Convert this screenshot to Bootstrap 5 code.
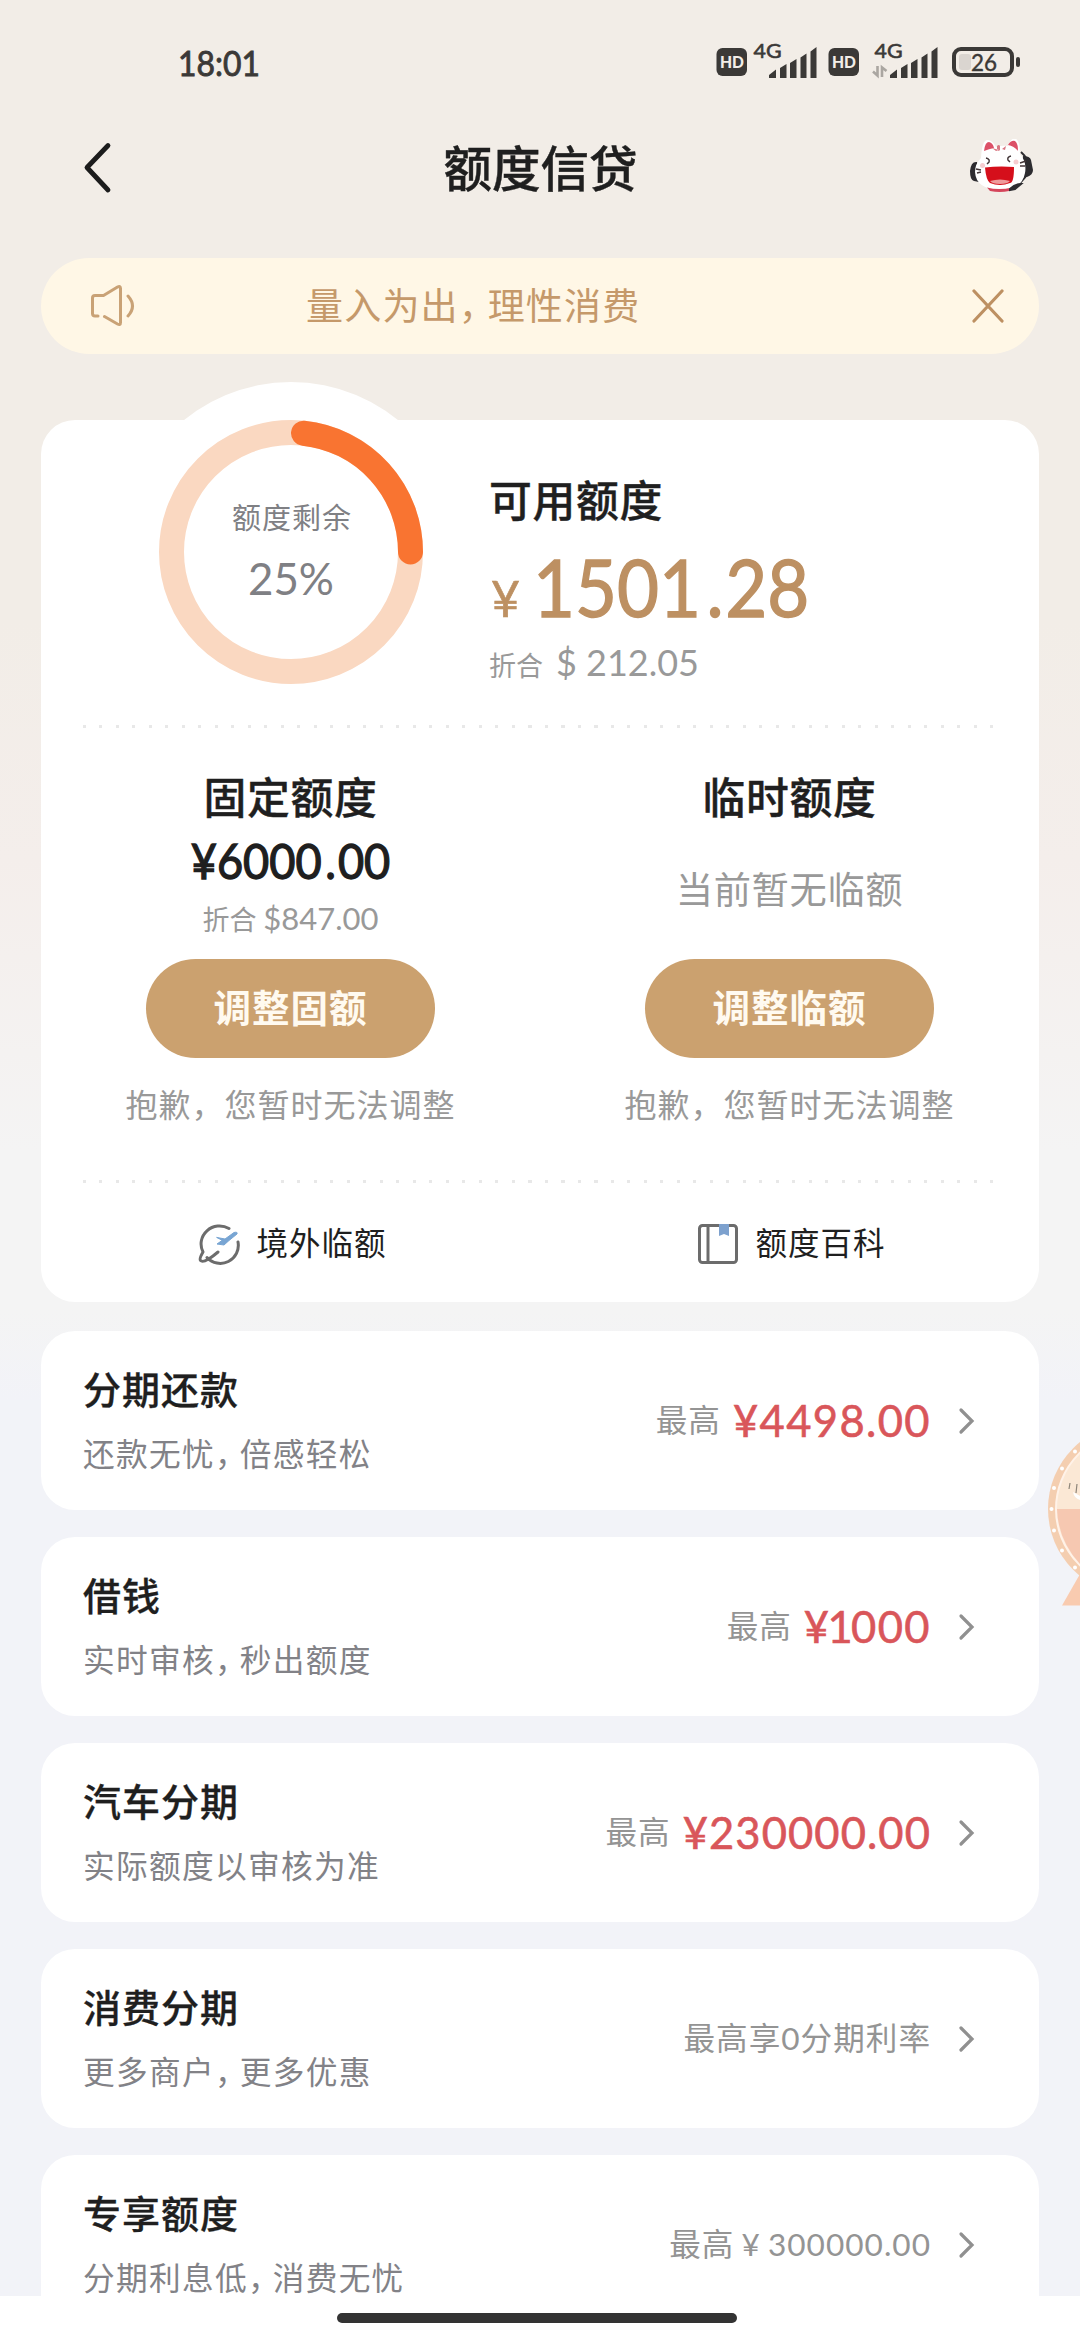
<!DOCTYPE html>
<html lang="zh-CN">
<head>
<meta charset="utf-8">
<meta name="viewport" content="width=device-width, initial-scale=1">
<title>额度信贷</title>
<link href="https://cdn.jsdelivr.net/npm/bootstrap@5.3.0/dist/css/bootstrap.min.css" rel="stylesheet">
<style>
body{font-family:Lato,"Noto Sans CJK SC",sans-serif;height:2340px;color:#1f1f1f;background:#fff}
.screen{width:1080px;height:2340px;background:linear-gradient(#f2ede7 0,#f2ede7 620px,#f4eeeb 860px,#f4f4f4 1150px,#f4f4f4 1310px,#f2f3f8 1400px)}
.statusbar{height:118px;padding:6px 59px 0 178px}
.clock{font-size:35px;color:#3b3937;transform:scaleX(.91);transform-origin:left;-webkit-text-stroke:.9px #3b3937}
.topbar{height:100px;padding:0 47px 0 82px}
.page-title{font-size:48.5px;font-weight:500;line-height:60px;padding-left:2px;-webkit-text-stroke:.4px #1f1f1f}
.notice{height:96px;margin:40px 41px 0;padding:0 34px 0 46px;background:#fff7e6;color:#c5996a;font-size:37px;letter-spacing:1.2px}
.notice-text{margin-left:171px}
.comma{font-feature-settings:"halt";padding:0 .28em 0 0;letter-spacing:0}
.panel{background:#fff;border-radius:34px;margin:0 41px}
.main-panel{margin-top:66px;height:882px}
.hero{height:305px;padding-left:80px}
.ring{width:340px;height:340px;margin-top:-38px}
.hero-info{margin-left:28px;padding-top:51px}
.h-sec{font-size:42.8px;font-weight:500;line-height:60px;letter-spacing:.7px;-webkit-text-stroke:.4px #1f1f1f}
.big-money{color:#bd9062;font-size:80px;line-height:84px;margin-top:13px;-webkit-text-stroke:1.4px #bd9062}
.big-money .yen{font-size:50px;margin:0 13px 0 2px;-webkit-text-stroke:.6px #bd9062}
.big-money .digits{display:inline-block;transform:scaleX(.905);transform-origin:left}
.big-money .pt{margin:0 2px 0 6px}
.conv{color:#999;line-height:40px;height:40px}
.dots{height:3px;margin:0 42px;background:repeating-linear-gradient(90deg,#e8e8e8 0 3px,transparent 3px 16.5px)}
.cols{height:452px;padding-top:40px}
.fixed-money{font-size:48px;line-height:60px;margin-top:3px;transform:scaleX(.94);-webkit-text-stroke:1.3px #1f1f1f}
.fixed-money .pt{margin:0 2px 0 4px}
.none-yet{font-size:37.3px;line-height:50px;color:#999;margin-top:37px;margin-bottom:44px;letter-spacing:.6px}
.pill{width:289px;height:99px;background:#cba16f;color:#fffaf0;font-size:37.5px;font-weight:700;letter-spacing:1px;border:0;border-radius:50px}
.sorry{font-size:32px;letter-spacing:1px;line-height:48px;color:#999;margin-top:23px}
.links{height:122px;font-size:31.5px;letter-spacing:1px;color:#1f1f1f}
.links>div{padding-left:4px}
.list{gap:27px;margin-top:29px;height:965px;overflow:hidden}
.item{height:179px;flex:none;padding:0 63px 0 42px}
.item-title{font-size:38px;font-weight:500;letter-spacing:1px;line-height:50px;margin-top:-3px;-webkit-text-stroke:.3px #1f1f1f}
.item-sub{font-size:31.7px;letter-spacing:1.3px;line-height:40px;margin-top:20px;color:#828287}
.hint{font-size:31.6px;letter-spacing:1px;color:#949494}
.red-money{color:#d9565a;font-size:43.5px;letter-spacing:1.4px;-webkit-text-stroke:.6px #d9565a;margin-left:12px}
.red-money .slim{margin:0 -3px}
.chev{margin-left:27px}
.homebar{height:44px;background:#fff;padding-right:7px}
.homebar span{width:400px;height:10px;border-radius:5px;background:#333}
.wheel{top:1420px;right:0;width:34px;height:188px}
</style>
</head>
<body>
<div class="screen d-flex flex-column position-relative overflow-hidden">
  <header class="statusbar d-flex justify-content-between align-items-center flex-shrink-0">
    <span class="clock">18:01</span>
    <svg width="306" height="62" viewBox="715 31 306 62" fill="#3b3937" font-family="Lato,sans-serif">
      <rect x="716.500" y="48" width="30.500" height="28" rx="6"/>
      <text x="720" y="68" font-size="16.500" font-weight="900" fill="#f2ede7" textLength="24" lengthAdjust="spacingAndGlyphs">HD</text>
      <text x="753.500" y="58" font-size="20" stroke="#3b3937" stroke-width=".6" textLength="28" lengthAdjust="spacingAndGlyphs">4G</text>
      <g id="bars"><path d="M769 78v-3l7-5.500V78zM780 78V68l6.500-4V78zM790 78V63l6.500-4V78zM800.500 78V57.500l6-4V78zM810.500 78V51.500l6-4.500V78z"/></g>
      <rect x="828.500" y="48" width="30.500" height="28" rx="6"/>
      <text x="832" y="68" font-size="16.500" font-weight="900" fill="#f2ede7" textLength="24" lengthAdjust="spacingAndGlyphs">HD</text>
      <text x="874.500" y="58" font-size="20" stroke="#3b3937" stroke-width=".6" textLength="28" lengthAdjust="spacingAndGlyphs">4G</text>
      <path d="M877.500 66v9.500l-4.500-4M882 77V67.500l4.500 3.500" stroke="#aaa6a1" stroke-width="2.600" fill="none"/>
      <use href="#bars" x="121"/>
      <rect x="954" y="49" width="58" height="26" rx="7" fill="none" stroke="#3b3937" stroke-width="4"/>
      <rect x="959" y="54" width="12" height="16" rx="3" fill="#dad5d0"/>
      <text x="971" y="70.500" font-size="22.500" stroke="#3b3937" stroke-width=".4" textLength="26" lengthAdjust="spacingAndGlyphs">26</text>
      <rect x="1016" y="57" width="4" height="10" rx="2"/>
    </svg>
  </header>

  <nav class="topbar d-flex justify-content-between align-items-center flex-shrink-0">
    <svg width="30" height="54" viewBox="0 0 30 54" fill="none" stroke="#1c1c1c" stroke-width="4.800" stroke-linecap="round" stroke-linejoin="round"><path d="M26 4.500 5 26.500l21 22.500"/></svg>
    <h1 class="page-title m-0">额度信贷</h1>
    <svg width="66" height="58" viewBox="965 139 66 58">
      <path d="M975 162q-6-1-7 9 0 9 4 10l5 1zM1021 156q7 0 8 4l2 10q0 5-6 7l-6 1z" fill="#2d2c30"/>
      <path d="M1019 152q7 6 8 16-2 12-18 21" fill="none" stroke="#2d2c30" stroke-width="2"/>
      <path d="M979 158q1-19 7-18 5 1 8 7 6-2 12-1 3-9 8-7 4 2 4 15 7 8 5 19-3 17-25 17-24-1-25-18 0-8 6-14z" fill="#fff"/>
      <path d="M982 151q1-9 5-9 4 1 5 6-5 1-10 3zM1006 145q3-5 7-4 3 2 3 10-4-5-10-6z" fill="#dc5168"/>
      <path d="M990 148l4 3 3-1zM995 146q2-2 3 0v4q-2 2-3 0zM1000 149l4-3-1 4z" fill="#d97782"/>
      <path d="M983 167.500q13-1.500 29-.500 0 16-4 16-10 4-20 0-4-3-5-15.500z" fill="#d50f1b"/>
      <path d="M988 181q10-3 20 0-2 3-10 3t-10-3z" fill="#ee9a9b"/>
      <path d="M985 187.500q12 3 25 0l-3 3.500q-9 2-19 0z" fill="#d5455b"/>
      <path d="M984 158q4 1 3 4l-2 2M1009 156q-4 1-3 4l2 2M974 169l5 1M975 173l4-1M1018 163l6-2M1018 166l5 0" fill="none" stroke="#413537" stroke-width="1.400"/>
      <circle cx="980.500" cy="165.500" r="2.500" fill="#f6cdd0"/><circle cx="1014" cy="162" r="2.500" fill="#f6cdd0"/>
      <path d="M1008 189q5-5 11-5l-6 5-5 1z" fill="#2d2c30" stroke="#2d2c30" stroke-width="2"/>
    </svg>
  </nav>

  <div class="notice d-flex align-items-center rounded-pill flex-shrink-0">
    <svg width="48" height="46" viewBox="88 283 48 46" fill="none" stroke="#c9a276" stroke-width="3" stroke-linecap="round" stroke-linejoin="round"><path d="M99 316h-3q-2.500 0-2.500-2.500V298q0-2.500 2.500-2.500h8.500l14-8.500q3-1.500 3 1.500v34q0 3-3 1.500l-13-7.500M129 296q9 10 0 20"/></svg>
    <span class="notice-text">量入为出<span class="comma">，</span>理性消费</span>
    <svg class="ms-auto" width="34" height="34" viewBox="0 0 34 34" stroke="#bd9062" stroke-width="3.200" stroke-linecap="round"><path d="M3 2 31 32M31 2 3 32"/></svg>
  </div>

  <section class="panel main-panel flex-shrink-0">
    <div class="hero d-flex align-items-start">
      <svg class="ring flex-shrink-0" viewBox="0 0 340 340" text-anchor="middle">
        <circle cx="170" cy="170" r="170" fill="#fff"/>
        <circle cx="170" cy="170" r="119.500" fill="none" stroke="#fad8c1" stroke-width="25"/>
        <path d="M182.500 51.200A119.500 119.500 0 0 1 289.500 170" fill="none" stroke="#f97431" stroke-width="25" stroke-linecap="round"/>
        <text x="171" y="147" font-size="29" letter-spacing="1" fill="#7f8084">额度剩余</text>
        <text x="170" y="212.500" font-size="44.500" fill="#7f8084" textLength="86" lengthAdjust="spacingAndGlyphs">25%</text>
      </svg>
      <div class="hero-info">
        <div class="h-sec">可用额度</div>
        <div class="big-money text-nowrap"><span class="yen">¥</span><span class="digits">1501<span class="pt">.</span>28</span></div>
        <div class="conv" style="margin-top:2px"><span style="font-size:27px">折合</span><span style="font-size:36px;margin-left:13px">$ 212.05</span></div>
      </div>
    </div>
    <div class="dots"></div>
    <div class="cols row g-0 text-center">
      <div class="col-6">
        <div class="h-sec">固定额度</div>
        <div class="fixed-money">¥6000<span class="pt">.</span>00</div>
        <div class="conv" style="margin:7px 0 21px"><span style="font-size:27px">折合 </span><span style="font-size:31px">$847.00</span></div>
        <button class="pill btn p-0">调整固额</button>
        <div class="sorry">抱歉，您暂时无法调整</div>
      </div>
      <div class="col-6">
        <div class="h-sec">临时额度</div>
        <div class="none-yet">当前暂无临额</div>
        <button class="pill btn p-0">调整临额</button>
        <div class="sorry">抱歉，您暂时无法调整</div>
      </div>
    </div>
    <div class="dots"></div>
    <div class="links row g-0 align-items-center">
      <div class="col-6 d-flex justify-content-center align-items-center">
        <svg class="me-3" width="42" height="42" viewBox="0 0 42 42" fill="none" stroke="#6c6c6c" stroke-width="3" stroke-linecap="round" stroke-linejoin="round"><path d="M31 5.500A18.500 18 0 0 0 5 29q-4 7-2.500 8.500Q6 41 20 29M9 34.500A18 18 0 0 0 40 19"/><path d="M19 14.500l8 1.500 9-6.500q4-1 3 1.500l-8 6.500-5 4.500-7-1 5-3.500z" fill="#78a5d3" stroke="#78a5d3" stroke-width="1"/></svg>
        <span>境外临额</span>
      </div>
      <div class="col-6 d-flex justify-content-center align-items-center">
        <svg class="me-3" width="42" height="42" viewBox="0 0 42 42" fill="none" stroke="#6c6c6c" stroke-width="3"><rect x="2.500" y="2.500" width="37" height="37" rx="3"/><path d="M11 3v36"/><path d="M22 1h10v12l-5-2-5 2z" fill="#7da1ce" stroke="none"/></svg>
        <span>额度百科</span>
      </div>
    </div>
  </section>

  <main class="list d-flex flex-column flex-shrink-0">
    <div class="panel item d-flex align-items-center">
      <div><div class="item-title">分期还款</div><div class="item-sub">还款无忧<span class="comma">，</span>倍感轻松</div></div>
      <span class="hint ms-auto">最高</span><span class="red-money">¥4498.00</span>
      <svg class="chev" width="18" height="28" viewBox="0 0 18 28" fill="none" stroke="#909090" stroke-width="3.200" stroke-linecap="round"><path d="M3 3 14 14 3 25"/></svg>
    </div>
    <div class="panel item d-flex align-items-center">
      <div><div class="item-title">借钱</div><div class="item-sub">实时审核<span class="comma">，</span>秒出额度</div></div>
      <span class="hint ms-auto">最高</span><span class="red-money">¥<span class="slim">1</span>000</span>
      <svg class="chev" width="18" height="28" viewBox="0 0 18 28" fill="none" stroke="#909090" stroke-width="3.200" stroke-linecap="round"><path d="M3 3 14 14 3 25"/></svg>
    </div>
    <div class="panel item d-flex align-items-center">
      <div><div class="item-title">汽车分期</div><div class="item-sub">实际额度以审核为准</div></div>
      <span class="hint ms-auto">最高</span><span class="red-money" style="letter-spacing:1.1px">¥230000.00</span>
      <svg class="chev" width="18" height="28" viewBox="0 0 18 28" fill="none" stroke="#909090" stroke-width="3.200" stroke-linecap="round"><path d="M3 3 14 14 3 25"/></svg>
    </div>
    <div class="panel item d-flex align-items-center">
      <div><div class="item-title">消费分期</div><div class="item-sub">更多商户<span class="comma">，</span>更多优惠</div></div>
      <span class="hint ms-auto">最高享0分期利率</span>
      <svg class="chev" width="18" height="28" viewBox="0 0 18 28" fill="none" stroke="#909090" stroke-width="3.200" stroke-linecap="round"><path d="M3 3 14 14 3 25"/></svg>
    </div>
    <div class="panel item d-flex align-items-center">
      <div><div class="item-title">专享额度</div><div class="item-sub">分期利息低<span class="comma">，</span>消费无忧</div></div>
      <span class="hint ms-auto" style="word-spacing:-2px">最高 ¥ 300000.00</span>
      <svg class="chev" width="18" height="28" viewBox="0 0 18 28" fill="none" stroke="#909090" stroke-width="3.200" stroke-linecap="round"><path d="M3 3 14 14 3 25"/></svg>
    </div>
  </main>

  <footer class="homebar d-flex justify-content-center align-items-center flex-shrink-0"><span></span></footer>

  <svg class="wheel position-absolute" viewBox="1046 1420 34 188">
    <path d="M1062 1605.500 1080 1574v31.500z" fill="#f9cbb0"/>
    <circle cx="1134" cy="1509" r="86" fill="#f4ceb0"/>
    <circle cx="1134" cy="1509" r="78" fill="#fbe8d5" stroke="#fff2e8" stroke-width="2"/>
    <path d="M1057 1509h23v55q-22-24-23-55z" fill="#f6c8b1"/>
    <g fill="#fff"><circle cx="1051.500" cy="1509" r="2"/><circle cx="1054" cy="1488" r="2"/><circle cx="1062" cy="1468.500" r="2"/><circle cx="1075" cy="1451.500" r="2"/><circle cx="1054" cy="1530.500" r="2"/><circle cx="1062" cy="1550.500" r="2"/><circle cx="1075" cy="1567.500" r="2"/></g>
    <path d="M1070 1483l-1 6M1077 1484l-1 9" stroke="#8d8579" stroke-width="1.200"/>
    <path d="M1073 1492l7 4v4q-6-2-7-8z" fill="#fff"/>
  </svg>
</div>
<script src="https://cdn.jsdelivr.net/npm/bootstrap@5.3.0/dist/js/bootstrap.bundle.min.js"></script>
</body>
</html>
